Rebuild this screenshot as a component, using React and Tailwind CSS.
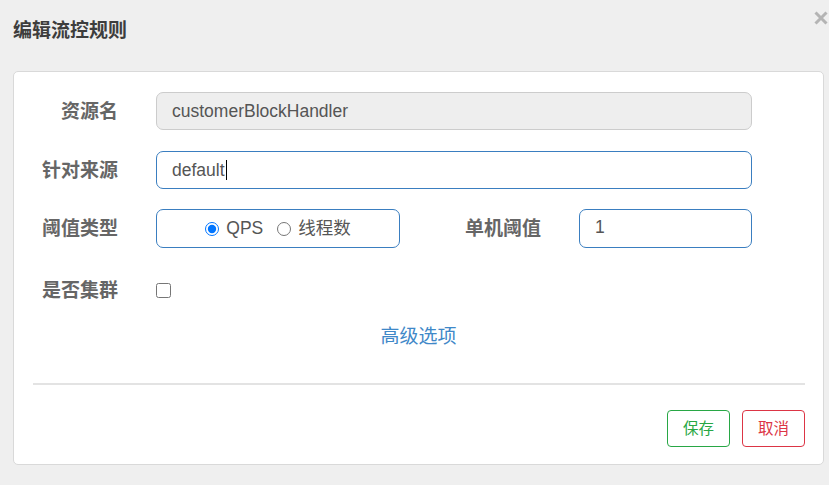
import React from "react";

const FONT = "font-['Liberation_Sans','Noto_Sans_CJK_SC',sans-serif]";

function Label({ children, className = "w-[104px]" }) {
  return (
    <div className={`${className} text-right text-[19px] font-bold text-[#666] leading-none`}>
      {children}
    </div>
  );
}

export default function App() {
  return (
    <div className={`w-[829px] h-[485px] bg-[#efefef] overflow-hidden ${FONT}`}>
      <div className="flex items-start justify-between h-[71px] pl-[13px]">
        <h4 className="pt-[21px] text-[19px] font-bold text-[#3d3d3d] leading-[20px]">编辑流控规则</h4>
        <button className="mt-[11px] mr-[1px] text-[#b4b4b4]" aria-label="close">
          <svg width="14" height="14" viewBox="0 0 14 14">
            <path d="M1.5 1.5 L12.5 12.5 M12.5 1.5 L1.5 12.5" stroke="currentColor" strokeWidth="3" />
          </svg>
        </button>
      </div>

      <div className="ml-[13px] w-[811px] h-[394px] bg-white border border-[#d9d9d9] rounded-[5px] pt-[20px]">
        {/* 资源名 */}
        <div className="flex items-center h-[38px]">
          <Label>资源名</Label>
          <div className="ml-[38px] w-[596px] h-[38px] flex items-center px-[15px] bg-[#eeeeee] border border-[#cccccc] rounded-[7px] text-[17.5px] text-[#555]">
            customerBlockHandler
          </div>
        </div>

        {/* 针对来源 */}
        <div className="flex items-center h-[38px] mt-[21px]">
          <Label>针对来源</Label>
          <div className="ml-[38px] w-[596px] h-[38px] flex items-center px-[15px] bg-white border border-[#3a7ec0] rounded-[7px] text-[17.5px] text-[#555]">
            default
            <span className="inline-block w-px h-[20px] bg-black ml-[1px]" />
          </div>
        </div>

        {/* 阈值类型 / 单机阈值 */}
        <div className="flex items-center h-[39px] mt-[20px]">
          <Label>阈值类型</Label>
          <div className="ml-[38px] w-[244px] h-[39px] flex items-center justify-center gap-[14px] border border-[#3a7ec0] rounded-[7px] text-[17.5px] text-[#555]">
            <label className="flex items-center gap-[7px]">
              <input type="radio" name="grade" defaultChecked className="w-[14px] h-[14px] m-0 accent-[#0075ff]" />
              QPS
            </label>
            <label className="flex items-center gap-[7px]">
              <input type="radio" name="grade" className="w-[14px] h-[14px] m-0" />
              线程数
            </label>
          </div>
          <Label className="w-[141px]">单机阈值</Label>
          <div className="ml-[38px] w-[173px] h-[39px] flex items-center px-[15px] pb-[2px] bg-white border border-[#3a7ec0] rounded-[7px] text-[17.5px] text-[#555]">
            1
          </div>
        </div>

        {/* 是否集群 */}
        <div className="flex items-center h-[38px] mt-[23px]">
          <Label>是否集群</Label>
          <input type="checkbox" className="ml-[38px] w-[15px] h-[15px] m-0" />
        </div>

        <div className="mt-[15px] h-[26px] flex items-center justify-center">
          <a className="text-[19px] text-[#3f88c8] cursor-pointer">高级选项</a>
        </div>

        <div className="mt-[33px] ml-[19px] mr-[18px] h-[2px] bg-[#e3e3e3]" />

        <div className="mt-[25px] flex justify-end gap-[12px] pr-[18px]">
          <button className="w-[63px] h-[37px] border border-[#28a745] rounded-[4px] text-[15.5px] text-[#28a745] bg-white">
            保存
          </button>
          <button className="w-[63px] h-[37px] border border-[#dc3545] rounded-[4px] text-[15.5px] text-[#dc3545] bg-white">
            取消
          </button>
        </div>
      </div>
    </div>
  );
}
